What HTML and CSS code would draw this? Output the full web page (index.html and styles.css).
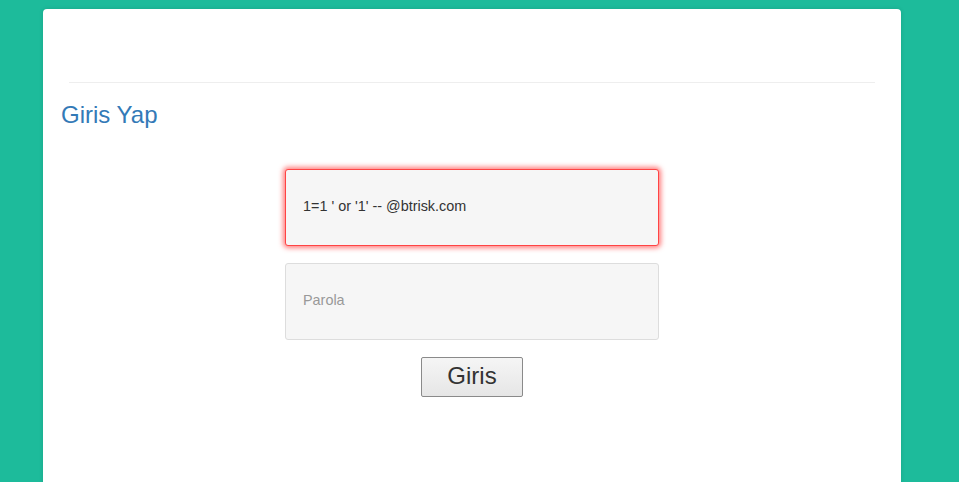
FILE: index.html
```html
<!DOCTYPE html>
<html lang="tr">
<head>
<meta charset="utf-8">
<title>Giris Yap</title>
<link rel="stylesheet" href="styles.css">
</head>
<body>
<div class="card">
  <hr class="divider">
  <h2 class="title">Giris Yap</h2>
  <form class="login">
    <input class="field field-error" type="text" value="1=1 ' or '1' -- @btrisk.com">
    <input class="field" type="password" placeholder="Parola">
    <button class="submit" type="button">Giris</button>
  </form>
</div>
</body>
</html>
```
FILE: styles.css
```css
html, body {
  margin: 0;
  padding: 0;
  background: #1dbb9b;
  font-family: "Liberation Sans", Arial, sans-serif;
  overflow: hidden;
}
.card {
  margin: 9px 58px 0 43px;
  background: #fff;
  border-radius: 4px 4px 0 0;
  padding-top: 73px;
  height: 600px;
  box-shadow: 0 0 4px rgba(0, 0, 0, 0.12);
}
.divider {
  margin: 0 26px;
  border: 0;
  border-top: 1px solid #eeeeee;
  height: 0;
}
.title {
  margin: 19px 0 0 18px;
  font-size: 24px;
  line-height: 26px;
  font-weight: normal;
  color: #337ab7;
}
.login {
  display: flex;
  flex-direction: column;
  align-items: center;
  margin-top: 41px;
}
.field {
  box-sizing: border-box;
  width: 374px;
  height: 77px;
  margin: 0 0 17px 0;
  padding: 0 17px 3px;
  background: #f6f6f6;
  border: 1px solid #dddddd;
  border-radius: 3px;
  font-family: "Liberation Sans", Arial, sans-serif;
  font-size: 14.4px;
  color: #333;
  outline: none;
}
.field::placeholder {
  color: #999;
}
.field-error {
  border-color: #f44;
  box-shadow: 0 0 5px 2px rgba(255, 40, 40, 0.6);
}
.submit {
  box-sizing: border-box;
  width: 102px;
  height: 40px;
  padding: 0 0 2px;
  border: 1px solid #8a8a8a;
  border-radius: 2px;
  background: linear-gradient(#f5f5f5, #e6e6e6);
  font-family: "Liberation Sans", Arial, sans-serif;
  font-size: 24px;
  color: #333;
}
```
